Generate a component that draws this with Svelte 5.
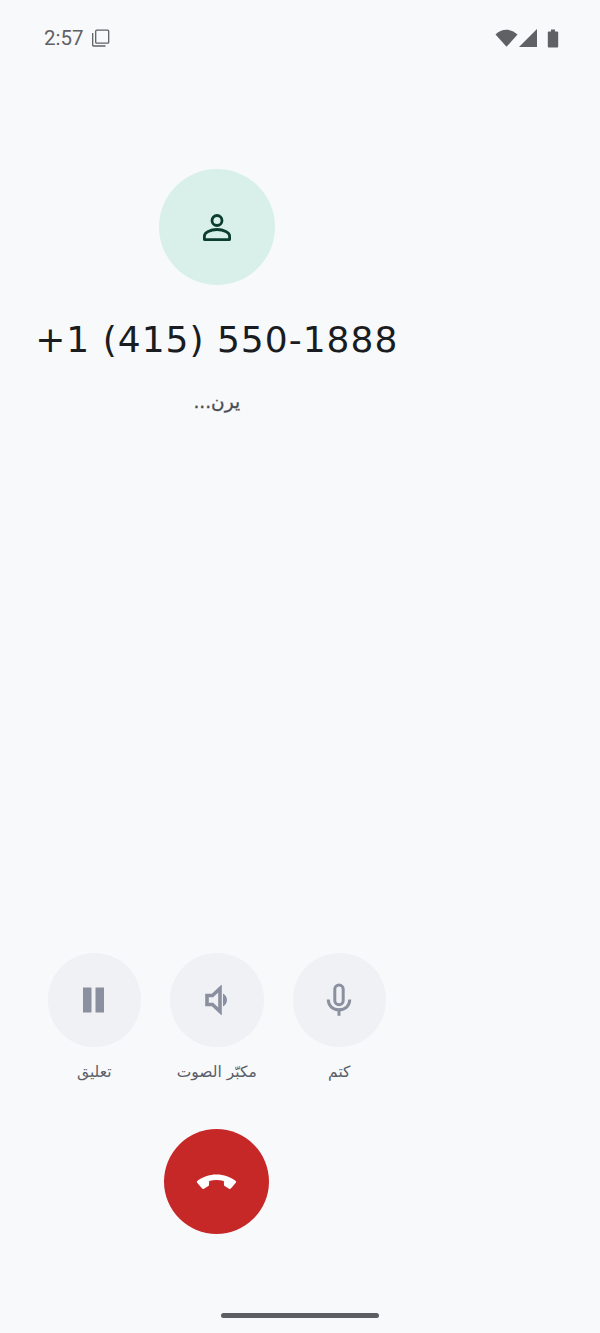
<script>
	// In-call screen: left-hand column is 434px wide, the rest of the page is empty.
	const actions = [
		{ id: 'mute', label: 'كتم' },
		{ id: 'speaker', label: 'مكبّر الصوت' },
		{ id: 'hold', label: 'تعليق' }
	];
</script>

<div class="screen">
	<header class="status">
		<div class="status-left">
			<span class="clock">2:57</span>
			<svg class="copy" width="20" height="20" viewBox="0 0 20 20" aria-hidden="true">
				<rect x="4.700" y="2.200" width="13" height="13" rx="1" fill="none" stroke="#5f6164" stroke-width="1.300" />
				<path d="M1.700 5v12.200a.8.8 0 0 0 .8.8h12" fill="none" stroke="#5f6164" stroke-width="1.300" />
			</svg>
		</div>
		<div class="status-right">
			<svg width="23" height="18" viewBox="0 0 23 18" aria-hidden="true">
				<path d="M0.500 5.600C3.400 2.800 7.200 0.800 11.500 0.800s8.100 2 11 4.800L11.500 17.800z" fill="#5f6164" />
			</svg>
			<svg class="signal" width="18" height="18" viewBox="0 0 18 18" aria-hidden="true">
				<path d="M18 0V18H0z" fill="#5f6164" />
			</svg>
			<svg width="12" height="19" viewBox="0 0 12 19" aria-hidden="true">
				<path d="M4 0.500h4v2h2.200a1 1 0 0 1 1 1V17.600a1 1 0 0 1-1 1H1.800a1 1 0 0 1-1-1V3.500a1 1 0 0 1 1-1H4z" fill="#5f6164" />
			</svg>
		</div>
	</header>

	<main class="call">
		<section class="caller">
			<div class="avatar">
				<svg width="28" height="28" viewBox="0 0 28 28" aria-hidden="true">
					<circle cx="14" cy="7.500" r="5" fill="none" stroke="#0b3d2e" stroke-width="2.800" />
					<path d="M1.400 26.600V23c0-3.600 6-6.500 12.600-6.500s12.600 2.900 12.600 6.500v3.600z" fill="none" stroke="#0b3d2e" stroke-width="2.800" stroke-linejoin="round" />
				</svg>
			</div>
			<h1 class="number">+1 (415) 550-1888</h1>
			<p class="state" dir="rtl">يرن...</p>
		</section>

		<section class="controls">
			<div class="actions" dir="rtl">
				{#each actions as action (action.id)}
					<div class="action">
						<button class="round" aria-label={action.label}>
							{#if action.id === 'mute'}
								<svg width="28" height="34" viewBox="0 0 30 36" aria-hidden="true">
									<rect x="10.500" y="2" width="9" height="21" rx="4.500" fill="none" stroke="#8a909f" stroke-width="3.200" />
									<path d="M3.500 17.500c0 7 5 11 11.500 11s11.500-4 11.500-11M15 28v7" fill="none" stroke="#8a909f" stroke-width="3.200" />
								</svg>
							{:else if action.id === 'speaker'}
								<svg width="30" height="30" viewBox="0 0 30 30" aria-hidden="true">
									<path d="M5 10.500h5.500l7.500-7V26.500l-7.500-7H5z" fill="none" stroke="#8a909f" stroke-width="3.600" />
									<path d="M21 8.500c2.500 1.500 4 3.800 4 6.500s-1.500 5-4 6.500z" fill="#8a909f" />
								</svg>
							{:else}
								<svg width="24" height="26" viewBox="0 0 24 26" aria-hidden="true">
									<rect x="1" y="0.500" width="8.500" height="25" fill="#8a909f" />
									<rect x="13.500" y="0.500" width="8.500" height="25" fill="#8a909f" />
								</svg>
							{/if}
						</button>
						<span class="label">{action.label}</span>
					</div>
				{/each}
			</div>

			<button class="hangup" aria-label="End call">
				<svg width="41" height="16" viewBox="0 0 42 18" preserveAspectRatio="none" aria-hidden="true">
					<path d="M21 0.500c7.600 0 14.400 2.700 19.700 7.300.6.500.6 1.400.1 2l-5.100 6.500c-.5.600-1.300.7-1.900.3l-4.400-3c-.5-.300-.7-.8-.7-1.300l-.2-4.300c-2.500-.9-5-1.300-7.500-1.300s-5 .4-7.500 1.300l-.2 4.300c0 .5-.2 1-.7 1.300l-4.400 3c-.6.4-1.400.3-1.900-.3L1.200 9.800c-.5-.6-.5-1.500.1-2C6.600 3.200 13.400.5 21 .5z" fill="#fff" />
				</svg>
			</button>
		</section>
	</main>

	<div class="home-bar"><span></span></div>
</div>

<style>
	:global(body) {
		margin: 0;
		background: #f8f9fb;
	}

	.screen {
		display: flex;
		flex-direction: column;
		height: 1333px;
		background: #f8f9fb;
		font-family: 'DejaVu Sans', 'Noto Sans', sans-serif;
		overflow: hidden;
	}

	.status {
		display: flex;
		flex: none;
		justify-content: space-between;
		align-items: center;
		height: 76px;
		padding: 0 41px 0 44px;
		color: #5f6164;
	}

	.status-left,
	.status-right {
		display: flex;
		align-items: center;
	}

	.status-left {
		gap: 7px;
	}

	.status-right {
		gap: 1px;
	}

	.signal {
		margin-right: 9px;
	}

	.clock {
		font-family: Roboto, 'Liberation Sans', sans-serif;
		font-size: 20.500px;
	}

	.call {
		display: flex;
		flex: 1;
		flex-direction: column;
		justify-content: space-between;
		width: 433.500px;
	}

	.caller {
		display: flex;
		flex-direction: column;
		align-items: center;
		padding-top: 93px;
	}

	.avatar {
		display: flex;
		align-items: center;
		justify-content: center;
		width: 116px;
		height: 116px;
		border-radius: 50%;
		background: #d8f0e9;
	}

	.number {
		margin: 31px 0 0;
		font-size: 36px;
		font-weight: 400;
		line-height: 48px;
		letter-spacing: 1px;
		color: #191c20;
		white-space: nowrap;
	}

	.state {
		margin: 24px 0 0;
		font-size: 18.500px;
		line-height: 28px;
		color: #4a4d55;
		-webkit-text-stroke: 0.3px #4a4d55;
	}

	.controls {
		display: flex;
		flex-direction: column;
		align-items: center;
	}

	.actions {
		display: flex;
		gap: 29px;
		justify-content: center;
	}

	.action {
		display: flex;
		flex-direction: column;
		align-items: center;
		width: 93.500px;
	}

	.round {
		display: flex;
		align-items: center;
		justify-content: center;
		width: 93.500px;
		height: 93.500px;
		padding: 0;
		border: 0;
		border-radius: 50%;
		background: #f0f1f5;
	}

	.label {
		margin-top: 13px;
		font-size: 15.500px;
		line-height: 24px;
		color: #5b5f69;
		white-space: nowrap;
	}

	.hangup {
		display: flex;
		align-items: center;
		justify-content: center;
		width: 105px;
		height: 105px;
		margin: 45.500px 0 79px;
		padding: 0;
		border: 0;
		border-radius: 50%;
		background: #c62828;
	}

	.home-bar {
		display: flex;
		flex: none;
		justify-content: center;
		height: 20px;
	}

	.home-bar span {
		width: 158px;
		height: 5px;
		border-radius: 3px;
		background: #5c5e62;
	}
</style>
